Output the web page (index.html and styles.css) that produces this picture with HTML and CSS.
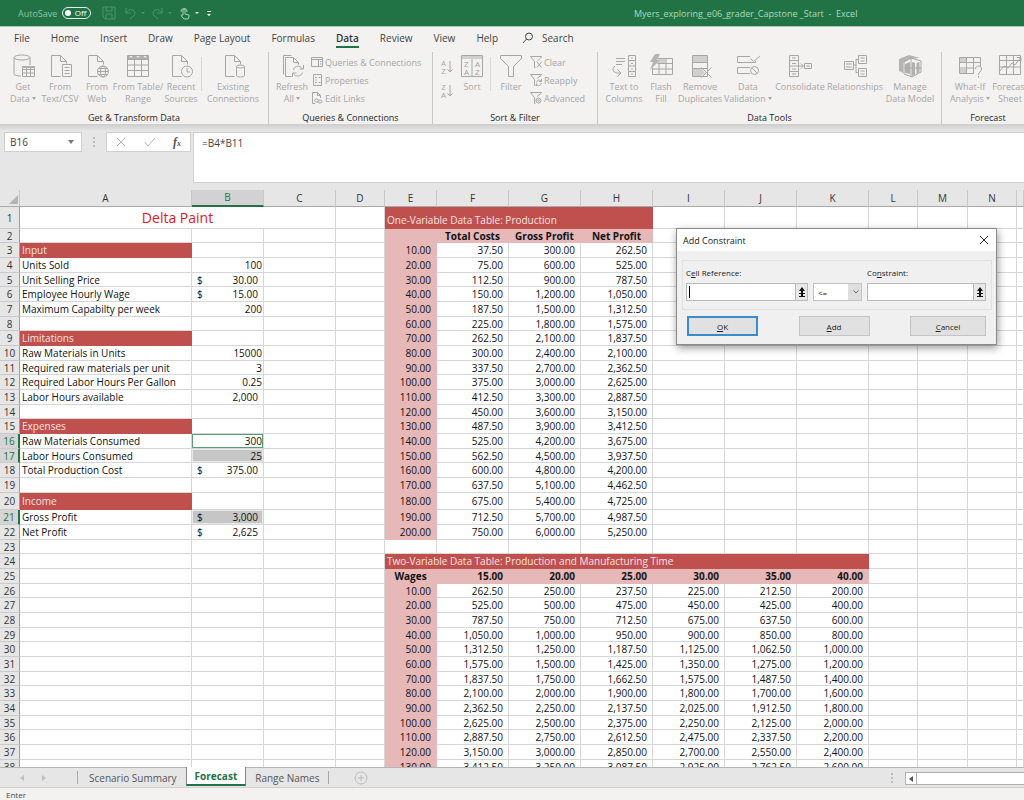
FILE: index.html
```html
<!DOCTYPE html>
<html lang="en">
<head>
<meta charset="utf-8">
<title>Myers_exploring_e06_grader_Capstone _Start - Excel</title>
<link rel="stylesheet" href="styles.css">
</head>
<body>
<header class="titlebar">
  <div class="quick">
    <label class="autosave">AutoSave <span class="switch"><input type="checkbox" aria-label="AutoSave"><span>Off</span></span></label>
    <button class="qbtn dim" aria-label="Save"><svg width="14" height="14" viewBox="0 0 14 14"><path d="M1 1h12v12H3l-2-2zM4 1v4h6V1M4 13V8h6v5"/></svg></button>
    <button class="qbtn dim wide" aria-label="Undo"><svg width="22" height="14" viewBox="0 0 22 14"><path d="M2 2v5h5M2 7c3-5 9-4 9 0 0 3-3 4-5 6"/><path class="solid" d="M17 6h4l-2 2z"/></svg></button>
    <button class="qbtn dim wide" aria-label="Redo"><svg width="22" height="14" viewBox="0 0 22 14"><path d="M11 2v5H6M11 7C8 2 2 3 2 7c0 3 3 4 5 6"/><path class="solid" d="M17 6h4l-2 2z"/></svg></button>
    <button class="qbtn wide" aria-label="Touch mode"><svg width="22" height="14" viewBox="0 0 22 14"><path d="M5 9V4c0-1 2-1 2 0v4l4 1v2l-1 2H6L3 9.500l1-.5zM3 6a3 3 0 1 1 6-1v1"/><path class="white" d="M17 6h4l-2 2z"/></svg></button>
    <button class="qbtn" aria-label="Customize"><svg width="8" height="14" viewBox="0 0 8 14"><path class="white" d="M2 5h4v1H2zM2 8h4L4 10z"/></svg></button>
  </div>
  <div class="doc-title">Myers_exploring_e06_grader_Capstone _Start&nbsp; -&nbsp; Excel</div>
</header>

<nav class="menu">
  <button>File</button><button>Home</button><button>Insert</button><button>Draw</button><button>Page Layout</button><button>Formulas</button><button class="active">Data</button><button>Review</button><button>View</button><button>Help</button>
  <button class="search"><svg width="12" height="12" viewBox="0 0 12 12"><circle cx="7" cy="4.500" r="3.500"/><path d="M4.500 7L1 11"/></svg>Search</button>
</nav>

<section class="ribbon" aria-label="Data ribbon">
  <div class="group g-get">
    <div class="tools">
      <button class="big w34"><svg viewBox="0 0 24 24"><ellipse cx="11" cy="3.500" rx="8" ry="2.500"/><path d="M3 3.500V20c0 1 3 2 7 2M19 3.500V11"/><path class="pane" d="M11.500 12.500h12v10h-12z"/><path d="M11.500 15.500h12M11.500 19h12M15.500 13v10M19.500 13v10"/><path class="dark" d="M11 12h13v2H11z"/></svg><span>Get<br>Data <i class="caret"></i></span></button>
      <button class="big w40"><svg viewBox="0 0 24 24"><path d="M3.500 22.500v-21h9l6 6v2M12.500 1.500v6h6M3.500 22.500h9"/><path class="pane" d="M14.500 10.500h9v12h-9z"/><path d="M16.500 13.500h5M16.500 16.500h5M16.500 19.500h5"/></svg><span>From<br>Text/CSV</span></button>
      <button class="big w34"><svg viewBox="0 0 24 24"><path d="M3.500 22.500v-21h9l6 6v3M12.500 1.500v6h6M3.500 22.500h9"/><circle class="pane" cx="18" cy="17.500" r="5.500"/><ellipse cx="18" cy="17.500" rx="2.500" ry="5.500"/><path d="M12.500 17.500h11M13.500 14.500h9M13.500 20.500h9"/></svg><span>From<br>Web</span></button>
      <button class="big w48"><svg viewBox="0 0 24 24"><path d="M1.500 1.500h21v21h-21zM1.500 5.500h21M1.500 11h21M1.500 16.500h21M8.500 5.500v17M15.500 5.500v17"/><path class="dark" d="M2 2h20v3H2z"/><path class="paper" d="M3.500 2h3L5 4zM10.500 2h3L12 4zM17.500 2h3L19 4z"/></svg><span>From Table/<br>Range</span></button>
      <button class="big w38"><svg viewBox="0 0 24 24"><path d="M3.500 22.500v-21h9l6 6v3M12.500 1.500v6h6M3.500 22.500h9"/><circle class="pane" cx="18" cy="17.500" r="5.500"/><path d="M18 14v4h3"/></svg><span>Recent<br>Sources</span></button>
      <i class="rule"></i>
      <button class="big w60"><svg viewBox="0 0 24 24"><path d="M4.500 22.500v-21h9l6 6v3M13.500 1.500v6h6M4.500 22.500h9"/><path class="pane" d="M15.500 12.500v9c0 2 8 2 8 0v-9z"/><ellipse class="pane" cx="19.500" cy="12.500" rx="4" ry="1.500"/></svg><span>Existing<br>Connections</span></button>
    </div>
    <h2>Get &amp; Transform Data</h2>
  </div>
  <div class="group g-query">
    <div class="tools">
      <button class="big w38"><svg viewBox="0 0 24 24"><path d="M3.500 20.500v-19h8M5.500 22.500v-19h8l5 5v2M13.500 3.500v5h5M5.500 22.500h6"/><path d="M13.500 16c1-5 7-5 9-1M23.500 11v4h-4M22.500 18.500c-1 4-7 5-9 1M12.500 23v-4h4"/></svg><span>Refresh<br>All <i class="caret"></i></span></button>
      <div class="stack">
        <button><svg viewBox="0 0 12 12"><path d="M.5 1.500h11v9H.5zM.5 3.500h11M7.500 3.500v7M9 5.500h1.500M9 8h1.500"/></svg>Queries &amp; Connections</button>
        <button><svg viewBox="0 0 12 12"><path d="M2.500.5h8v11h-8zM4 3.500h2M4 6h2M4 8.500h2M7.500 3.500h2M7.500 8.500h2"/></svg>Properties</button>
        <button><svg viewBox="0 0 12 12"><path d="M4 11.500H1.500V.5h5l3 3V6M6.500.5v3h3"/><ellipse cx="5.500" cy="8.500" rx="2" ry="1.500"/><ellipse cx="9" cy="9.500" rx="2" ry="1.500"/></svg>Edit Links</button>
      </div>
    </div>
    <h2>Queries &amp; Connections</h2>
  </div>
  <div class="group g-sort">
    <div class="tools">
      <div class="stack az">
        <button aria-label="Sort A to Z"><span>A<br>Z</span><svg viewBox="0 0 6 14"><path d="M3 1v11M.5 9.500L3 12l2.500-2.500"/></svg></button>
        <button aria-label="Sort Z to A"><span>Z<br>A</span><svg viewBox="0 0 6 14"><path d="M3 1v11M.5 9.500L3 12l2.500-2.500"/></svg></button>
      </div>
      <button class="big w34"><svg viewBox="0 0 24 24"><path d="M1.500 1.500h21v21h-21zM12 4v18"/><path class="fill" d="M2 2h20v3H2z"/><text x="4" y="13">Z</text><text x="4" y="21">A</text><text x="15" y="13">A</text><text x="15" y="21">Z</text></svg><span>Sort</span></button>
      <i class="rule"></i>
      <button class="big w38"><svg viewBox="0 0 24 24"><path d="M1.500 1.500h21v3l-8 8v10h-5v-10l-8-8z"/></svg><span>Filter</span></button>
      <div class="stack">
        <button><svg viewBox="0 0 12 12"><path d="M7 5.500L11.500 1v-.5H.5L4.500 5.500v6h1M7 6l4.500 5.500M11.500 6L7 11.500"/></svg>Clear</button>
        <button><svg viewBox="0 0 12 12"><path d="M7 4.500L11.500 1v-.5H.5L4.500 5.500v6h1M6.500 8.500c1-3 3-3 5-1M11.500 5v2.500H9M11.500 9c-1 3-3 3-5 1.500M6.500 12V9.500"/></svg>Reapply</button>
        <button><svg viewBox="0 0 12 12"><path d="M7 4.500L11.500 1v-.5H.5L4.500 5.500v6h1"/><circle cx="8.500" cy="8.500" r="2.500"/><circle cx="8.500" cy="8.500" r=".8"/></svg>Advanced</button>
      </div>
    </div>
    <h2>Sort &amp; Filter</h2>
  </div>
  <div class="group g-tools">
    <div class="tools">
      <button class="big w40"><svg viewBox="0 0 24 24"><path d="M16.500 1.500h7v21h-7zM16.500 6.500h7M16.500 12h7M16.500 17.500h7M19 4h2M19 9.500h2M19 15h2M19 20h2M4 4.500h9M4 7.500h9M4 10.500h6M3 12c-4 3-2 8 5 7M5.500 15.500L9 19l-3.500 3.500"/></svg><span>Text to<br>Columns</span></button>
      <button class="big w34"><svg viewBox="0 0 24 24"><path d="M8.500 4.500h15v16h-20V14M8.500 9.500h15M4 15h19.500M10 9v11.500M17 4.500v16"/><path class="fill" d="M9 5h7v4H9z"/><path class="bolt" d="M6 0h5L8 6h3L1 16l3-8H1z"/></svg><span>Flash<br>Fill</span></button>
      <button class="big w44"><svg viewBox="0 0 24 24"><path d="M4.500 1.500h15v21h-15z"/><path class="fill" d="M5 2h14v6H5zM5 15h9l3 4-4 3H5z"/><path d="M4.500 8.500h15M4.500 14.500h15M13.500 13.500l10 10M23.500 13.500l-10 10"/></svg><span>Remove<br>Duplicates</span></button>
      <button class="big w52"><svg viewBox="0 0 24 24"><path d="M14 2.500H1.500v6h18V7M14 13.500H1.500v6H14M14.500 4.500l3 3 7-6"/><circle class="pane" cx="18.500" cy="16.500" r="4"/><path d="M16 14l5 5"/></svg><span>Data<br>Validation <i class="caret"></i></span></button>
      <button class="big w52"><svg viewBox="0 0 24 24"><path d="M1.500 1.500h9v21h-9zM1.500 6.500h9M1.500 12h9M1.500 17.500h9M4 4h4M4 9.500h4M4 15h4M4 20h4M11 12h4M13 9.500l2.500 2.500-2.500 2.500M16.500 9.500h7v5h-7zM18 12h4"/></svg><span>Consolidate</span></button>
      <button class="big w58"><svg viewBox="0 0 24 24"><path d="M1.500 7.500h9v8h-9zM15.500 1.500h8v8h-8zM15.500 14.500h8v8h-8zM3 10h6M3 13h6M17.500 4h4M17.500 7h4M17.500 17h4M17.500 20h4M10.500 11h2.500M13 5.500v13h2.500M13 5.500h2.500"/></svg><span>Relationships</span></button>
      <button class="big w52"><svg viewBox="0 0 24 24"><path class="bolt" d="M1 5l10-4 11 3-10 1-7 4v10l-4-2z"/><path class="pane" d="M6 8l7-4 10 3v11l-9 5-8-3z"/><path class="dark" d="M7 10l5-2v12l-5-1zM14 8l3 1v12l-3 1zM18.500 9l3-1v10l-3 2z"/><path d="M6 14h17M13 4v19"/></svg><span>Manage<br>Data Model</span></button>
    </div>
    <h2>Data Tools</h2>
  </div>
  <div class="group g-forecast">
    <div class="tools">
      <button class="big w40"><svg viewBox="0 0 24 24"><path d="M16 19.500H1.500v-16h21v9M1.500 8.500h21M1.500 14h15M8.500 3.500v16M15.500 3.500v16"/><path class="fill" d="M2 4h6v4H2zM2 14h6v5H2z"/><path d="M17.500 15c0-4 6-4 6 0 0 3-3 3-3 6M20.500 22v1.500"/></svg><span>What-If<br>Analysis <i class="caret"></i></span></button>
      <button class="big w40"><svg viewBox="0 0 24 24"><path d="M1.500 1.500h21v19h-21zM1.500 6.500h21M1.500 13h21M8.500 1.500v19M15.500 1.500v19"/><path d="M1 18l5-6 4 2 4-5 3 2 6-8M19 3.500h4V7"/></svg><span>Forecast<br>Sheet</span></button>
    </div>
    <h2>Forecast</h2>
  </div>
</section>

<section class="formula">
  <button class="namebox">B16 <i class="caret"></i></button>
  <i class="dots"></i>
  <div class="fx">
    <button aria-label="Cancel"><svg width="10" height="10" viewBox="0 0 10 10"><path d="M1 1l8 8M9 1L1 9"/></svg></button>
    <button aria-label="Enter"><svg width="12" height="10" viewBox="0 0 12 10"><path d="M1 5l3 4 7-8"/></svg></button>
    <button class="fn" aria-label="Insert function">f<small>x</small></button>
  </div>
  <textarea class="input" aria-label="Formula">=B4*B11</textarea>
</section>

<main class="sheet">
  <table>
    <colgroup><col class="c-head"><col class="c-a"><col class="c-std"><col class="c-std"><col class="c-sm"><col class="c-e"><col class="c-std"><col class="c-std"><col class="c-std"><col class="c-std"><col class="c-std"><col class="c-std"><col class="c-sm"><col class="c-m"><col class="c-sm"><col></colgroup>
    <thead><tr><th class="corner"><i></i></th><th>A</th><th class="sel">B</th><th>C</th><th>D</th><th>E</th><th>F</th><th>G</th><th>H</th><th>I</th><th>J</th><th>K</th><th>L</th><th>M</th><th>N</th><th></th></tr></thead>
    <tbody id="grid"></tbody>
  </table>

  <form class="dialog" role="dialog" aria-labelledby="dlg-title">
    <div class="dlg-head"><span id="dlg-title">Add Constraint</span><button type="button" aria-label="Close"><svg width="10" height="10" viewBox="0 0 10 10"><path d="M1 1l8 8M9 1L1 9"/></svg></button></div>
    <div class="dlg-box">
      <div class="field f-ref"><label for="ref">C<u>e</u>ll Reference:</label><div class="pick"><input id="ref" class="focused" type="text"><button type="button" aria-label="Pick cell"><svg width="8" height="10" viewBox="0 0 8 10"><path d="M4 0l3 4H5v2h2v1H5v2H3V7H1V6h2V4H1zM1 9h6v1H1z"/></svg></button></div></div>
      <div class="choice"><select aria-label="Operator"><option>&lt;=</option><option>=</option><option>&gt;=</option></select><svg viewBox="0 0 8 8"><path d="M1.500 2.500L4 5l2.500-2.500"/></svg></div>
      <div class="field f-con"><label for="con">Co<u>n</u>straint:</label><div class="pick"><input id="con" type="text"><button type="button" aria-label="Pick constraint"><svg width="8" height="10" viewBox="0 0 8 10"><path d="M4 0l3 4H5v2h2v1H5v2H3V7H1V6h2V4H1zM1 9h6v1H1z"/></svg></button></div></div>
    </div>
    <div class="dlg-actions"><button type="button" class="ok"><u>O</u>K</button><button type="button"><u>A</u>dd</button><button type="button" class="cancel"><u>C</u>ancel</button></div>
  </form>
</main>

<footer>
  <div class="sheets">
    <div class="arrows"><button aria-label="Previous sheet"><i class="tri left"></i></button><button aria-label="Next sheet"><i class="tri right"></i></button></div>
    <button class="tab t-scen">Scenario Summary</button><button class="tab active">Forecast</button><button class="tab t-range">Range Names</button>
    <button class="plus" aria-label="New sheet"><svg width="14" height="14" viewBox="0 0 14 14"><circle cx="7" cy="7" r="6"/><path d="M7 4v6M4 7h6"/></svg></button>
    <i class="dots"></i>
    <div class="scroll"><button aria-label="Scroll left"><i class="tri left"></i></button></div>
  </div>
  <div class="status">Enter</div>
</footer>
<script src="grid.js"></script>
</body>
</html>
```
FILE: styles.css
```css
* { box-sizing: border-box; }
html, body { height: 100%; }
body {
  margin: 0;
  display: flex;
  flex-direction: column;
  overflow: hidden;
  background: #e6e6e6;
  color: #262626;
  font-family: "Open Sans", "Noto Sans", sans-serif;
  font-size: 10px;
}
button, input, select, textarea { font: inherit; color: inherit; margin: 0; padding: 0; border: 0; background: none; border-radius: 0; }
svg { display: block; fill: none; stroke: currentColor; }
i { font-style: normal; }

/* title bar */
.titlebar { flex: none; display: flex; align-items: center; height: 27px; background: #217346; border-bottom: 1px solid #a9c9b6; color: #a9dcbd; }
.quick { display: flex; align-items: center; width: 634px; padding-left: 18px; }
.autosave { display: flex; align-items: center; gap: 5px; width: 84px; font-size: 9px; color: #8cc5a2; }
.switch { display: flex; align-items: center; justify-content: space-between; width: 29px; height: 12px; padding: 0 4px 0 2px; border: 1px solid #e6f2ea; border-radius: 6px; color: #fff; font-size: 8px; line-height: 10px; }
.switch input { appearance: none; width: 6px; height: 6px; border-radius: 50%; background: #fff; }
.qbtn { width: 14px; margin-right: 8px; color: #a5d3b8; }
.qbtn.wide { width: 22px; margin-right: 5px; }
.qbtn.dim { color: #4f946d; }
.doc-title { white-space: nowrap; font-size: 9px; }
.solid { fill: currentColor; stroke: none; }
.white { fill: #fff; stroke: none; }

/* menu */
.menu { flex: none; display: flex; height: 23px; padding: 2px 0 0 14px; gap: 21px; background: #f3f2f1; color: #444; }
.menu button { flex: none; height: 19px; border-bottom: 2px solid transparent; line-height: 18px; white-space: nowrap; }
.menu .active { border-color: #217346; font-weight: 600; color: #333; }
.menu .search { display: flex; align-items: center; gap: 8px; margin-left: 3px; }

/* ribbon */
.ribbon { flex: none; display: flex; height: 74px; padding-top: 2px; overflow: hidden; background: #f3f2f1; color: #a6a6a6; font-size: 9px; }
.group { flex: none; display: flex; flex-direction: column; justify-content: space-between; height: 72px; border-right: 1px solid #c6c6c6; }
.g-get { width: 269px; }
.g-query { width: 164px; }
.g-sort { width: 165px; }
.g-tools { width: 344px; }
.g-forecast { width: 92px; border: 0; }
.group h2 { margin: 0; font-size: 9px; line-height: 12px; font-weight: 400; text-align: center; color: #262626; }
.tools { display: flex; padding-left: 6px; }
.g-query .tools { padding-left: 4px; }
.g-sort .tools, .g-forecast .tools { padding-left: 8px; }
.big { flex: none; display: flex; flex-direction: column; align-items: center; padding-top: 2px; line-height: 12px; white-space: nowrap; }
.big svg { width: 24px; height: 24px; margin-bottom: 3px; }
.big > span { display: block; }
.w34 { width: 34px; } .w38 { width: 38px; } .w40 { width: 40px; } .w44 { width: 44px; }
.w48 { width: 48px; } .w52 { width: 52px; } .w58 { width: 58px; } .w60 { width: 60px; }
.rule { width: 1px; height: 34px; margin: 5px 1px; background: #d8d8d8; }
.pane { fill: #f3f2f1; }
.fill { fill: #cfcfcf; stroke: none; }
.dark { fill: #b0b0b0; stroke: none; }
.paper { fill: #f3f2f1; stroke: none; }
.bolt { fill: #b4b4b4; stroke: none; }
svg text { fill: #a0a0a0; stroke: none; font-size: 8px; }
.stack { display: flex; flex-direction: column; padding-top: 1px; }
.stack button { display: flex; align-items: center; gap: 2px; height: 18px; white-space: nowrap; }
.stack svg { width: 12px; height: 12px; }
.az { width: 14px; gap: 6px; padding-top: 6px; }
.az button { gap: 1px; font-size: 8px; line-height: 8px; }
.az svg { width: 6px; height: 14px; }
.caret { display: inline-block; border: 2px solid transparent; border-top: 3px solid currentColor; border-bottom: 0; vertical-align: 2px; }

/* formula bar */
.formula { flex: none; display: flex; align-items: flex-start; height: 66px; padding-top: 8px; padding-left: 4px; background: linear-gradient(#cdcdcd, #e6e6e6 7px); }
.namebox { display: flex; align-items: center; justify-content: space-between; width: 78px; height: 20px; padding: 0 7px 0 5px; background: #fff; border: 1px solid #cfcfcf; color: #444; }
.namebox .caret { border-width: 4px 3px 0; color: #777; }
.dots { width: 2px; height: 11px; margin: 5px 11px; background: repeating-linear-gradient(#bbb 0 2px, transparent 2px 4px); }
.fx { display: flex; align-items: center; justify-content: space-between; width: 85px; height: 20px; padding: 0 9px; background: #fff; border: 1px solid #cfcfcf; color: #b5b5b5; }
.fn { color: #555; font: italic bold 12px "Liberation Serif", serif; }
.fn small { font-size: 8px; }
.input { flex: 1; height: 51px; margin-left: 2px; padding: 3px 8px; resize: none; outline: 0; background: #fff; border: 1px solid #cfcfcf; border-right: 0; color: #444; overflow: hidden; }

/* sheet */
.sheet { flex: 1; min-height: 0; position: relative; overflow: hidden; background: #fff; }
.sheet table { width: 100%; table-layout: fixed; border-collapse: separate; border-spacing: 0; color: #111; }
.c-head { width: 20px; } .c-a { width: 172px; } .c-std { width: 72px; } .c-sm { width: 49px; } .c-m { width: 50px; } .c-e { width: 52px; }
.sheet th { padding: 0; font-weight: 400; background: #e6e6e6; color: #333; }
thead th { height: 17px; line-height: 15px; border-right: 1px solid #c9c9c9; border-bottom: 1px solid #a8a8a8; }
thead th.sel { background: #d2d2d2; color: #217346; border-bottom: 2px solid #217346; }
.corner i { display: block; width: 0; margin: 3px 1px 0 auto; border-left: 9px solid transparent; border-bottom: 9px solid #b4b4b4; }
tbody tr { height: 15px; }
tbody tr:nth-child(3n+2) { height: 14px; }
tbody tr:first-child { height: 22px; }
tbody tr.tall { height: 17px; }
tbody th { border-right: 1px solid #9d9d9d; border-bottom: 1px solid #cacaca; }
tbody th.sel { background: #d5d5d5; color: #217346; border-right: 2px solid #217346; }
tbody td, tbody th { line-height: 12px; white-space: nowrap; }
tbody td { padding: 0 2px; border-right: 1px solid #d6d6d6; border-bottom: 1px solid #d6d6d6; }
td.num { padding-right: 5px; text-align: right; }
td.int { padding-right: 1px; text-align: right; }
td.money div { display: flex; justify-content: space-between; padding: 0 3px; }
td.red { background: #c0504d; border-color: #c0504d; color: #f7e4e3; }
td.pink { background: #e6b8b7; border-color: #e6b8b7; }
td.bold { font-weight: 700; }
td.center { text-align: center; }
td.low { vertical-align: bottom; padding-bottom: 2px; }
td.title { font-size: 14px; text-align: center; color: #e0191f; }
td.grey { background: #c6c6c6; box-shadow: inset 0 0 0 1px #e9e9e9; }
td.cursor { box-shadow: inset 0 0 0 1px #5d9a78; }

/* dialog */
.dialog { position: absolute; left: 676px; top: 38px; width: 321px; background: #f0f0f0; border: 1px solid #8a8a8a; box-shadow: 1px 3px 8px rgba(0, 0, 0, .4); color: #222; font-size: 8px; }
.dlg-head { display: flex; align-items: center; justify-content: space-between; height: 22px; padding: 0 7px 0 6px; background: #fff; font-size: 9px; }
.dlg-box { display: flex; align-items: flex-end; margin: 9px 4px 6px 5px; padding: 6px 7px 8px 3px; border: 1px solid #e2e2e2; }
.field label { display: block; height: 16px; line-height: 12px; }
.field u { text-underline-offset: 1px; }
.f-ref { width: 122px; }
.f-con { width: 119px; }
.pick { display: flex; height: 18px; border: 1px solid #b9b9b9; background: #fff; }
.pick input { flex: 1; min-width: 0; outline: 0; }
.pick input.focused { background: linear-gradient(#000, #000) 2px 2px / 1px 12px no-repeat; }
.pick button { width: 12px; border-left: 1px solid #b9b9b9; background: #e8e8e8; display: flex; align-items: center; justify-content: center; }
.pick svg { fill: #111; stroke: none; }
.choice { display: grid; grid-template-columns: 36px 13px; align-items: center; width: 49px; margin: 0 5px; }
.choice select { grid-area: 1 / 1 / 2 / 3; appearance: none; height: 18px; padding-left: 4px; border: 1px solid #c4c4c4; background: linear-gradient(90deg, #fff 34px, #dedede 34px); }
.choice svg { grid-area: 1 / 2; width: 8px; height: 8px; justify-self: center; pointer-events: none; color: #666; }
.dlg-actions { display: flex; justify-content: space-between; padding: 0 10px 8px; }
.dlg-actions button { width: 71px; height: 20px; background: #e1e1e1; border: 1px solid #c4c4c4; }
.dlg-actions .ok { border: 2px solid #3c8ccc; }
.dlg-actions .cancel { width: 76px; }

/* bottom */
footer { flex: none; }
.sheets { display: flex; align-items: stretch; height: 21px; border-top: 1px solid #b5b5b5; border-bottom: 1px solid #cfcfcf; color: #555; }
.arrows { display: flex; justify-content: space-between; width: 78px; margin: 3px 0; padding: 0 31px 0 20px; border-right: 1px solid #a8a8a8; color: #c0c0c0; }
.tri { display: block; border: 3px solid transparent; }
.tri.left { border-left: 0; border-right: 4px solid currentColor; }
.tri.right { border-right: 0; border-left: 4px solid currentColor; }
.tab { padding: 0 9px; white-space: nowrap; }
.tab.t-scen { padding-left: 11px; }
.tab.active { height: 19px; margin-top: -1px; padding: 0 8px; background: #fff; border-right: 1px solid #888; border-left: 1px solid #888; border-bottom: 2px solid #217346; color: #217346; font-weight: 700; }
.t-range { margin: 3px 0; border-right: 1px solid #a8a8a8; }
.plus { margin: 0 auto 0 25px; color: #bcbcbc; }
.sheets .dots { margin: 5px 12px; }
.scroll { width: 119px; height: 13px; margin-top: 4px; border: 1px solid #b0b0b0; border-right: 0; background: #fff; }
.scroll button { display: flex; align-items: center; justify-content: center; width: 11px; height: 11px; border-right: 1px solid #b0b0b0; color: #555; }
.status { height: 12px; padding-left: 6px; background: #f3f2f1; font-size: 8px; line-height: 14px; color: #444; }
```
FILE: grid.js
```js
const money = v => v.toLocaleString("en-US", { minimumFractionDigits: 2, maximumFractionDigits: 2 });

// Columns A and B: [label, label class, value, value class]
const left = {
  3: ["Input", "red"],
  4: ["Units Sold", "", "100", "int"],
  5: ["Unit Selling Price", "", "30.00", "money"],
  6: ["Employee Hourly Wage", "", "15.00", "money"],
  7: ["Maximum Capabilty per week", "", "200", "int"],
  9: ["Limitations", "red"],
  10: ["Raw Materials in Units", "", "15000", "int"],
  11: ["Required raw materials per unit", "", "3", "int"],
  12: ["Required Labor Hours Per Gallon", "", "0.25", "int"],
  13: ["Labor Hours available", "", "2,000", "num"],
  15: ["Expenses", "red"],
  16: ["Raw Materials Consumed", "", "300", "int cursor"],
  17: ["Labor Hours Consumed", "", "25", "int grey"],
  18: ["Total Production Cost", "", "375.00", "money"],
  20: ["Income", "red"],
  21: ["Gross Profit", "", "3,000", "money grey"],
  22: ["Net Profit", "", "2,625", "money"]
};

const grid = document.getElementById("grid");

function addCell(tr, text, cls, span) {
  const td = document.createElement("td");
  td.className = cls || "";
  if (span) td.colSpan = span;
  if (/money/.test(td.className)) td.innerHTML = `<div><span>$</span><span>${text}</span></div>`;
  else td.textContent = text || "";
  tr.append(td);
}

for (let r = 1; r <= 38; r++) {
  const tr = document.createElement("tr");
  if (r === 20) tr.className = "tall";
  const th = document.createElement("th");
  th.textContent = r;
  if ([16, 17, 21].includes(r)) th.className = "sel";
  tr.append(th);

  if (r === 1) {
    addCell(tr, "Delta Paint", "title", 3);
  } else {
    const [label, labelCls, value, valueCls] = left[r] || [];
    addCell(tr, label, labelCls);
    addCell(tr, value, valueCls);
    addCell(tr);
  }
  addCell(tr);

  let used = 0;
  if (r === 1) {
    addCell(tr, "One-Variable Data Table: Production", "red low", 4);
    used = 4;
  } else if (r === 2) {
    addCell(tr, "", "pink");
    ["Total Costs", "Gross Profit", "Net Profit"].forEach(t => addCell(tr, t, "pink bold center"));
    used = 4;
  } else if (r <= 22) {
    const units = (r - 2) * 10;
    addCell(tr, money(units), "pink num");
    [3.75, 30, 26.25].forEach(k => addCell(tr, money(units * k), "num"));
    used = 4;
  } else if (r === 24) {
    addCell(tr, "Two-Variable Data Table: Production and Manufacturing Time", "red", 7);
    used = 7;
  } else if (r === 25) {
    addCell(tr, "Wages", "pink bold center");
    [15, 20, 25, 30, 35, 40].forEach(w => addCell(tr, money(w), "pink bold num"));
    used = 7;
  } else if (r > 25) {
    const units = (r - 25) * 10;
    addCell(tr, money(units), "pink num");
    [15, 20, 25, 30, 35, 40].forEach(w => addCell(tr, money(units * (30 - w / 4)), "num"));
    used = 7;
  }
  for (; used < 11; used++) addCell(tr);
  grid.append(tr);
}
```
